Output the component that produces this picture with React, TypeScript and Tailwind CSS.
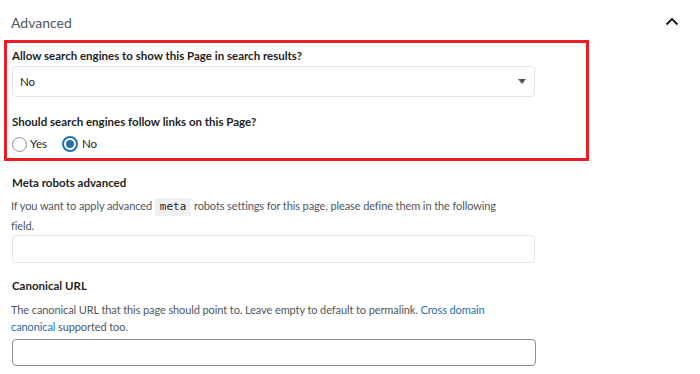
export default function App() {
  return (
    <div
      className="w-[700px] h-[374px] bg-white overflow-hidden text-[#1e1e1e] relative"
      style={{ fontFamily: 'Lato, "Noto Sans", sans-serif' }}
    >
      <div className="flex items-center justify-between pl-[11px] pr-[21px] pt-[10px] h-[34px]">
        <span className="text-[14px] text-[#50575e]">Advanced</span>
        <svg width="14" height="9" viewBox="0 0 14 9" className="mt-[-2px]">
          <path d="M1.5 7.5 L7 2 L12.5 7.5" fill="none" stroke="#1e1e1e" strokeWidth="2" />
        </svg>
      </div>

      <div className="ml-[4px] w-[585px] h-[121px] mt-[6px] border-[3px] border-[#ec1c24] pl-[5px] pr-[50px]">
        <div className="text-[11.5px] font-bold text-[#1e1e1e] mt-[4px] leading-[18px]">
          Allow search engines to show this Page in search results?
        </div>
        <div className="mt-[1px] h-[31px] w-[523px] border border-[#e2e4e7] rounded-[4px] flex items-center justify-between pl-[7px] pr-[8px]">
          <span className="text-[11.5px] text-[#1e1e1e]">No</span>
          <svg width="8" height="5" viewBox="0 0 8 5">
            <path d="M0 0 H8 L4 5 Z" fill="#555" />
          </svg>
        </div>
        <div className="text-[11.5px] font-bold text-[#1e1e1e] mt-[16px] leading-[18px]">
          Should search engines follow links on this Page?
        </div>
        <div className="flex items-center mt-[4px] text-[11.5px] leading-[18px] text-[#1e1e1e]">
          <span className="w-[15px] h-[15px] rounded-full border border-[#8c8f94] bg-white" />
          <span className="ml-[3px]">Yes</span>
          <span className="ml-[15px] w-[16px] h-[16px] rounded-full border-2 border-[#2271b1] flex items-center justify-center">
            <span className="w-[8px] h-[8px] rounded-full bg-[#2271b1]" />
          </span>
          <span className="ml-[4px]">No</span>
        </div>
      </div>

      <div className="pl-[11px]">
        <div className="text-[11.5px] font-bold mt-[13px] leading-[18px] pl-[1px]">Meta robots advanced</div>
        <p className="w-[500px] text-[11px] tracking-[-0.1px] leading-[19px] text-[#50575e] mt-[4px]">
          If you want to apply advanced{' '}
          <code
            className="inline-block bg-[#f0f0f1] px-[5px] text-[11px] tracking-normal leading-[18px] text-[#1e1e1e]"
            style={{ fontFamily: '"DejaVu Sans Mono", monospace' }}
          >
            meta
          </code>{' '}
          robots settings for this page, please define them in the following field.
        </p>
        <div className="ml-[1px] h-[28px] w-[523px] border border-[#e2e4e7] rounded-[4px]" />

        <div className="text-[11.5px] font-bold mt-[14px] leading-[18px] pl-[1px]">Canonical URL</div>
        <p className="w-[500px] text-[11px] tracking-[-0.1px] leading-[17px] text-[#50575e] mt-[6px]">
          The canonical URL that this page should point to. Leave empty to default to permalink.{' '}
          <a className="text-[#2271b1]">Cross domain canonical</a> supported too.
        </p>
        <div className="ml-[1px] mt-[4px] h-[27px] w-[524px] border border-[#8c8f94] rounded-[4px]" />
      </div>
    </div>
  );
}
